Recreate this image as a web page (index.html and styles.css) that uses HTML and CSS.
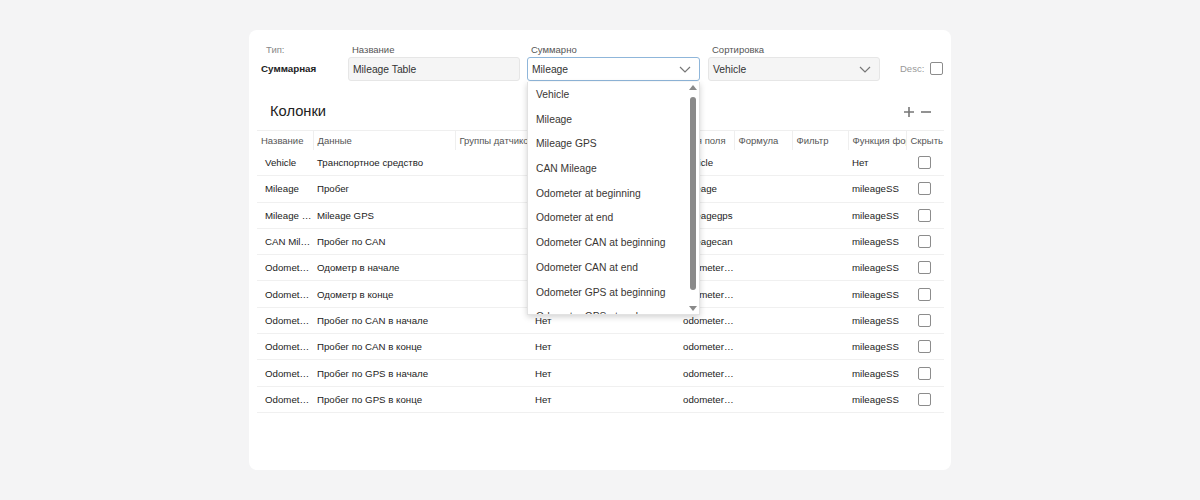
FILE: index.html
```html
<!DOCTYPE html>
<html lang="ru">
<head>
    <meta charset="UTF-8">
    <meta name="viewport" content="width=device-width, initial-scale=1.0">
    <title>Mileage Table</title>
    <link rel="stylesheet" href="styles.css">
</head>
<body>
    <div class="card">
        <div class="form-row">
            <div class="field type">
                <label>Тип:</label>
                <div class="type-value">Суммарная</div>
            </div>
            <div class="field w172">
                <label>Название</label>
                <div class="control grey">Mileage Table</div>
            </div>
            <div class="field w173">
                <label>Суммарно</label>
                <div class="control focus">
                    <span>Mileage</span>
                    <svg class="chev" width="12" height="7" viewBox="0 0 12 7"><polyline points="1,1 6,6 11,1" fill="none" stroke="#777" stroke-width="1.2"/></svg>
                </div>
            </div>
            <div class="field w172">
                <label>Сортировка</label>
                <div class="control grey">
                    <span>Vehicle</span>
                    <svg class="chev" width="12" height="7" viewBox="0 0 12 7"><polyline points="1,1 6,6 11,1" fill="none" stroke="#777" stroke-width="1.2"/></svg>
                </div>
            </div>
            <div class="desc">
                <span>Desc:</span>
                <input type="checkbox" class="box">
            </div>
        </div>

        <div class="section-head">
            <h3>Колонки</h3>
            <div class="tools">
                <svg width="12" height="12" viewBox="0 0 12 12"><path d="M6 1v10M1 6h10" stroke="#777" stroke-width="1.6"/></svg>
                <svg width="12" height="12" viewBox="0 0 12 12"><path d="M1 6h10" stroke="#777" stroke-width="1.6"/></svg>
            </div>
        </div>

        <table class="cols">
            <colgroup>
                <col style="width:56px"><col style="width:142px"><col style="width:76px"><col style="width:148px">
                <col style="width:55px"><col style="width:58px"><col style="width:56px"><col style="width:58px"><col style="width:38px">
            </colgroup>
            <thead>
                <tr>
                    <th>Название</th>
                    <th>Данные</th>
                    <th>Группы датчиков</th>
                    <th>Суммирование</th>
                    <th>Имя поля</th>
                    <th>Формула</th>
                    <th>Фильтр</th>
                    <th>Функция форматирования</th>
                    <th>Скрыть</th>
                </tr>
            </thead>
            <tbody>
                <tr><td>Vehicle</td><td>Транспортное средство</td><td></td><td>Нет</td><td>vehicle</td><td></td><td></td><td>Нет</td><td><input type="checkbox" class="box"></td></tr>
                <tr><td>Mileage</td><td>Пробег</td><td></td><td>Нет</td><td>mileage</td><td></td><td></td><td>mileageSS</td><td><input type="checkbox" class="box"></td></tr>
                <tr><td>Mileage GPS</td><td>Mileage GPS</td><td></td><td>Нет</td><td>mileagegps</td><td></td><td></td><td>mileageSS</td><td><input type="checkbox" class="box"></td></tr>
                <tr><td>CAN Mileage</td><td>Пробег по CAN</td><td></td><td>Нет</td><td>mileagecan</td><td></td><td></td><td>mileageSS</td><td><input type="checkbox" class="box"></td></tr>
                <tr><td>Odometer at beginning</td><td>Одометр в начале</td><td></td><td>Нет</td><td>odometer_begin</td><td></td><td></td><td>mileageSS</td><td><input type="checkbox" class="box"></td></tr>
                <tr><td>Odometer at end</td><td>Одометр в конце</td><td></td><td>Нет</td><td>odometer_end</td><td></td><td></td><td>mileageSS</td><td><input type="checkbox" class="box"></td></tr>
                <tr><td>Odometer CAN at beginning</td><td>Пробег по CAN в начале</td><td></td><td>Нет</td><td>odometer_can_begin</td><td></td><td></td><td>mileageSS</td><td><input type="checkbox" class="box"></td></tr>
                <tr><td>Odometer CAN at end</td><td>Пробег по CAN в конце</td><td></td><td>Нет</td><td>odometer_can_end</td><td></td><td></td><td>mileageSS</td><td><input type="checkbox" class="box"></td></tr>
                <tr><td>Odometer GPS at beginning</td><td>Пробег по GPS в начале</td><td></td><td>Нет</td><td>odometer_gps_begin</td><td></td><td></td><td>mileageSS</td><td><input type="checkbox" class="box"></td></tr>
                <tr><td>Odometer GPS at end</td><td>Пробег по GPS в конце</td><td></td><td>Нет</td><td>odometer_gps_end</td><td></td><td></td><td>mileageSS</td><td><input type="checkbox" class="box"></td></tr>
            </tbody>
        </table>

        <!-- open dropdown of "Суммарно" -->
        <div class="dropdown">
            <ul class="options">
                <li>Vehicle</li>
                <li>Mileage</li>
                <li>Mileage GPS</li>
                <li>CAN Mileage</li>
                <li>Odometer at beginning</li>
                <li>Odometer at end</li>
                <li>Odometer CAN at beginning</li>
                <li>Odometer CAN at end</li>
                <li>Odometer GPS at beginning</li>
                <li>Odometer GPS at end</li>
            </ul>
            <div class="scroll-up"></div>
            <div class="scroll-thumb"></div>
            <div class="scroll-down"></div>
        </div>
    </div>
</body>
</html>
```

FILE: styles.css
```css
*{
    margin: 0;
    padding: 0;
    box-sizing: border-box;
    list-style: none;
}

body{
    background: #f4f4f5;
    font-family: "Liberation Sans", Arial, sans-serif;
    font-size: 10px;
    color: #222;
    padding-top: 30px;
}

.card{
    position: relative;
    width: 702px;
    height: 440px;
    margin: 0 auto;
    background: #fff;
    border-radius: 8px;
    padding: 14px 6px 0 8px;
}

/* top form */
.form-row{
    display: flex;
    align-items: flex-end;
    padding-left: 4px;
}

.field{
    display: flex;
    flex-direction: column;
    margin-right: 7px;
}

.field label{
    font-size: 9.5px;
    line-height: 12px;
    color: #555;
    padding-left: 4px;
    margin-bottom: 1px;
}

.type{
    width: 80px;
}

.type label{
    color: #888;
    padding-left: 5px;
}

.type-value{
    font-weight: 700;
    line-height: 24px;
    font-size: 9.8px;
}

.w172{ width: 172px; }
.w173{ width: 173px; margin-right: 8px; }

.control{
    height: 24px;
    border: 1px solid #e6e6e6;
    border-radius: 3px;
    display: flex;
    align-items: center;
    justify-content: space-between;
    padding: 0 8px 0 4px;
    font-size: 10.3px;
    color: #333;
}

.control.grey{
    background: #f5f5f5;
}

.control.focus{
    border-color: #8fb6da;
}

.chev{
    display: block;
}

.desc{
    display: flex;
    align-items: center;
    height: 24px;
    margin-left: 13px;
    color: #999;
    font-size: 9.5px;
    padding-bottom: 2px;
}

.desc .box{
    margin-left: 6px;
}

.box{
    appearance: none;
    width: 13px;
    height: 13px;
    border: 1px solid #8c8c8c;
    border-radius: 2px;
    background: #fff;
    display: block;
}

/* columns section */
.section-head{
    display: flex;
    align-items: center;
    justify-content: space-between;
    margin-top: 20px;
    padding: 0 13px;
    height: 20px;
}

.section-head h3{
    font-size: 14.7px;
    font-weight: 400;
    color: #222;
}

.tools{
    display: flex;
    gap: 5px;
    padding-top: 2px;
}

.cols{
    margin-top: 9px;
    width: 687px;
    table-layout: fixed;
    border-collapse: collapse;
}

.cols th{
    height: 19px;
    font-size: 9.5px;
    font-weight: 400;
    color: #555;
    text-align: left;
    padding: 0 4px;
    white-space: nowrap;
    overflow: hidden;
    border-top: 1px solid #efefef;
    border-left: 1px solid #efefef;
}

.cols th:first-child{
    border-left: none;
}

.cols td{
    height: 26.3px;
    padding: 0 1px 0 4px;
    font-size: 9.7px;
    white-space: nowrap;
    overflow: hidden;
    text-overflow: ellipsis;
    border-bottom: 1px solid #f0f0f0;
    color: #222;
}

.cols td:first-child{
    padding: 0 0 0 8px;
}

.cols td:nth-child(5){
    padding-right: 0;
}

.cols td:last-child{
    padding-left: 12px;
}

/* dropdown */
.dropdown{
    position: absolute;
    left: 278px;
    top: 52px;
    width: 173px;
    height: 233px;
    background: #fff;
    border: 1px solid #e2e2e2;
    border-top: none;
    box-shadow: 0 2px 6px rgba(0,0,0,0.18);
    overflow: hidden;
}

.options li{
    height: 24.7px;
    line-height: 25.5px;
    padding-left: 8px;
    font-size: 10.3px;
    color: #3a3633;
    white-space: nowrap;
}

.scroll-thumb{
    position: absolute;
    right: 3px;
    top: 15px;
    width: 6px;
    height: 193px;
    border-radius: 3px;
    background: #8a8a8a;
}

.scroll-up,
.scroll-down{
    position: absolute;
    right: 2px;
    width: 0;
    height: 0;
    border-left: 4px solid transparent;
    border-right: 4px solid transparent;
}

.scroll-up{
    top: 3px;
    border-bottom: 5px solid #8a8a8a;
}

.scroll-down{
    bottom: 3px;
    border-top: 5px solid #8a8a8a;
}
```
